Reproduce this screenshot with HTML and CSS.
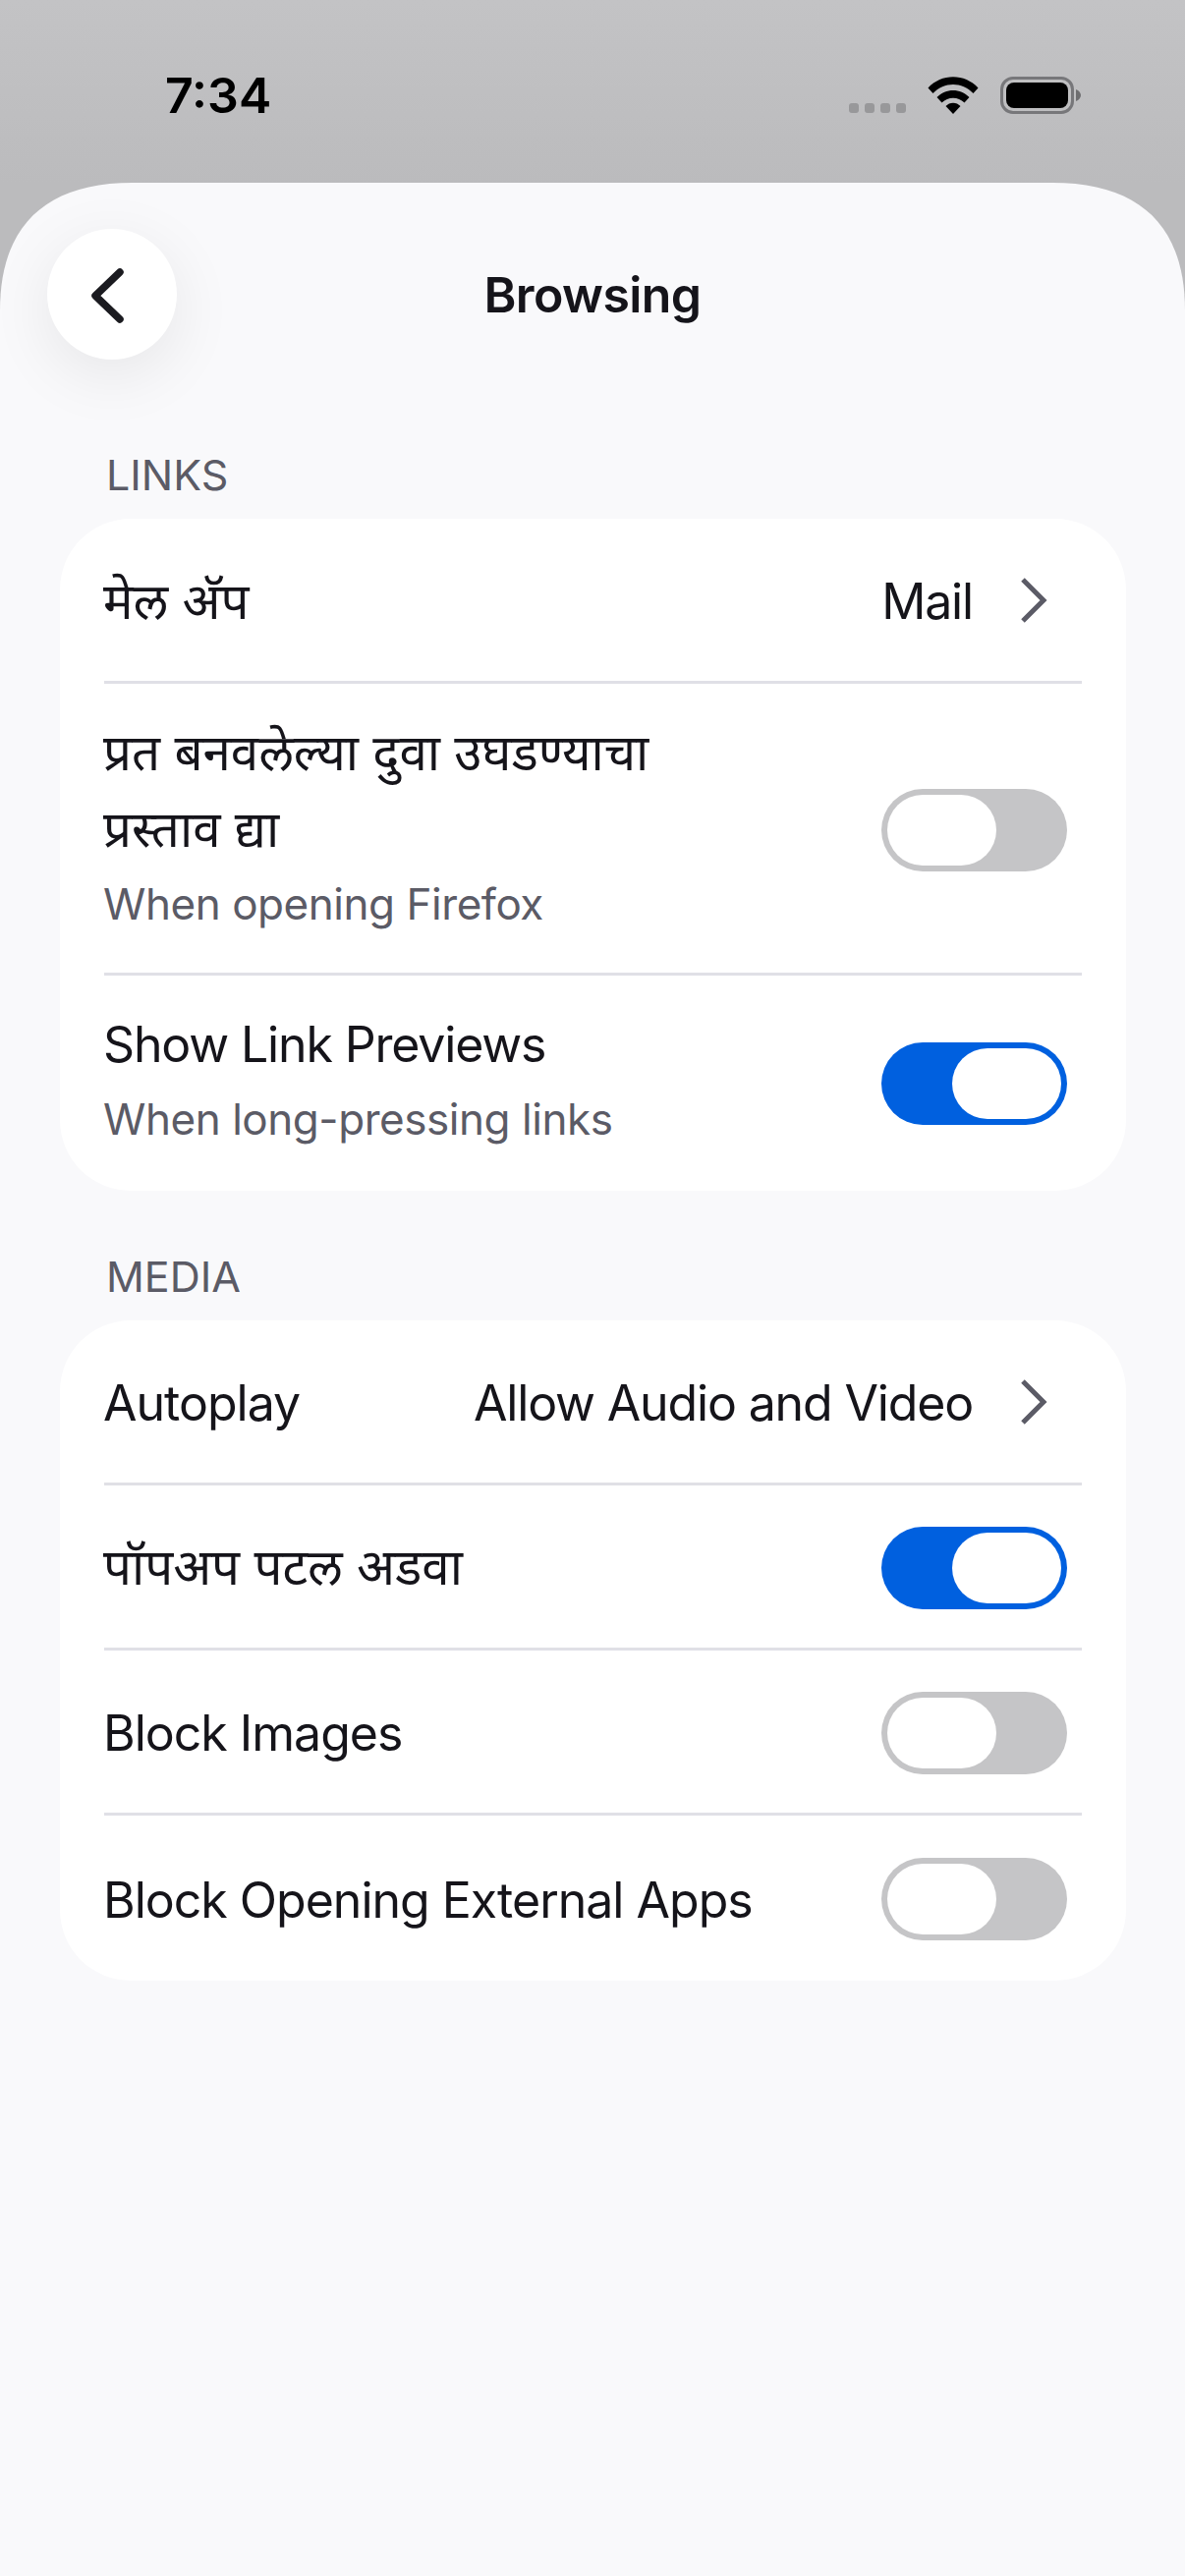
FILE: index.html
```html
<!DOCTYPE html>
<html lang="mr">
<head>
<meta charset="utf-8">
<title>Browsing</title>
<link rel="stylesheet" href="styles.css">
</head>
<body>
<div class="screen">
  <header class="status">
    <span class="time">7:34</span>
    <div class="status-icons">
      <div class="dots"><i></i><i></i><i></i><i></i></div>
      <svg class="wifi" width="52" height="38" viewBox="0 0 52 38"><path d="M0.5 11.500 C14 -3.500 38 -3.500 51.500 11.500 L46.500 17 C35 5 17 5 5.500 17 Z M9.500 21 C18.500 11.500 33.500 11.500 42.500 21 L37.500 26.500 C31 20 21 20 14.500 26.500 Z M18.500 30 C22.500 25.500 29.500 25.500 33.500 30 L26 38 Z" fill="#000"/></svg>
      <div class="battery"><div class="battery-body"><div class="battery-fill"></div></div><svg class="battery-tip" width="5" height="12" viewBox="0 0 5 12"><path d="M0 0 C3 1 5 3.500 5 6 C5 8.500 3 11 0 12 Z" fill="#6e6e70"/></svg></div>
    </div>
  </header>
  <main class="sheet">
    <div class="nav">
      <button class="back"><svg width="33" height="56" viewBox="0 0 33 56"><path d="M29 4 L4 28 L29 52" fill="none" stroke="#1b1b20" stroke-width="7.500" stroke-linecap="round" stroke-linejoin="round"/></svg></button>
      <h1 class="title">Browsing</h1>
    </div>
    <h2 class="section-label first">LINKS</h2>
    <section class="card">
      <div class="row nav-row"><span class="label deva single">मेल अ‍ॅप</span><span class="value single">Mail</span><svg class="chev" width="28" height="46" viewBox="0 0 28 46"><path d="M3 2 L24 23 L3 44" fill="none" stroke="#5b5b66" stroke-width="5"/></svg></div>
      <div class="row tall"><div class="text"><span class="label deva wrap">प्रत बनवलेल्या दुवा उघडण्याचा प्रस्ताव द्या</span><span class="sub">When opening Firefox</span></div><div class="toggle"><div class="knob"></div></div></div>
      <div class="row medium"><div class="text"><span class="label">Show Link Previews</span><span class="sub">When long-pressing links</span></div><div class="toggle on"><div class="knob"></div></div></div>
    </section>
    <h2 class="section-label">MEDIA</h2>
    <section class="card">
      <div class="row nav-row"><span class="label single">Autoplay</span><span class="value single">Allow Audio and Video</span><svg class="chev" width="28" height="46" viewBox="0 0 28 46"><path d="M3 2 L24 23 L3 44" fill="none" stroke="#5b5b66" stroke-width="5"/></svg></div>
      <div class="row plain"><span class="label deva">पॉपअप पटल अडवा</span><div class="toggle on"><div class="knob"></div></div></div>
      <div class="row plain"><span class="label single">Block Images</span><div class="toggle"><div class="knob"></div></div></div>
      <div class="row plain"><span class="label single">Block Opening External Apps</span><div class="toggle"><div class="knob"></div></div></div>
    </section>
  </main>
</div>
</body>
</html>
```
FILE: styles.css
```css
* { box-sizing: border-box; }
html, body { margin: 0; padding: 0; }
body { width: 1206px; height: 2622px; overflow: hidden; font-family: Inter, "Noto Sans", "Noto Sans Devanagari", "Liberation Sans", sans-serif; color: #15141a; background: #bfbfc1; }
.screen { width: 1206px; height: 2622px; display: flex; flex-direction: column; background: linear-gradient(#c3c3c5, #bbbbbd 186px); }
.status { height: 186px; flex: none; display: flex; justify-content: space-between; align-items: flex-start; padding: 72px 106px 0 168px; }
.time { font-size: 50px; line-height: 50px; font-weight: 600; color: #000; }
.status-icons { display: flex; align-items: flex-start; padding-top: 6px; }
.dots { display: flex; gap: 6px; margin-top: 27px; margin-right: 22px; }
.dots i { width: 10px; height: 10px; border-radius: 3px; background: #98989a; }
.battery { display: flex; align-items: center; margin-left: 22px; }
.battery-body { width: 75px; height: 38px; border: 3px solid #77777a; border-radius: 13px; padding: 3px; }
.battery-fill { width: 100%; height: 100%; background: #000; border-radius: 8px; }
.battery-tip { margin-left: 2px; }
.sheet { flex: 1; background: #f9f9fb; clip-path: path("M0 130 C0 45 45 0 135 0 L1071 0 C1161 0 1206 45 1206 130 L1206 2436 L0 2436 Z"); padding: 47px 60px 0 61px; }
.nav { height: 133px; position: relative; display: flex; align-items: center; justify-content: center; margin-left: -61px; margin-right: -60px; }
.back { position: absolute; left: 48px; top: 0; width: 132px; height: 133px; border: 0; padding: 2px 9px 0 0; border-radius: 50%; background: #fff; box-shadow: 0 16px 64px rgba(0,0,0,.08); display: flex; align-items: center; justify-content: center; }
.title { margin: 0; font-size: 50px; line-height: 60px; font-weight: 600; letter-spacing: -0.6px; color: #15141a; }
.section-label { margin: 62px 0 20px; font-size: 43px; line-height: 50px; font-weight: 400; color: #5b5b66; padding-left: 47px; height: 50px; }
.section-label.first { margin-top: 92px; }
.card { background: #fff; border-radius: 72px; padding: 0 45px; }
.row { display: flex; align-items: center; border-bottom: 3px solid #e0e0e6; padding-right: 15px; }
.row:last-child { border-bottom: 0; }
.nav-row { height: 168px; padding-right: 35px; }
.tall { height: 297px; }
.tall .text { margin-bottom: 3px; }
.tall .toggle { margin-top: 3px; }
.medium { height: 219px; }
.medium .text { margin-bottom: 6px; }
.plain { height: 168px; }
.plain .toggle { margin-top: 2px; }
.label { font-size: 50px; line-height: 78px; letter-spacing: -1.15px; display: block; margin-left: -1px; }
.single { padding-top: 3px; letter-spacing: -1px; }
.deva { font-size: 51px; letter-spacing: 0; }
.wrap { width: 600px; }
.text { flex: 1; display: flex; flex-direction: column; }
.sub { font-size: 44px; line-height: 74px; letter-spacing: -0.45px; color: #5b5b66; display: block; margin-left: -1px; }
.nav-row .label { flex: none; }
.value { flex: 1; text-align: right; font-size: 50px; line-height: 78px; letter-spacing: -1.15px; margin-right: 48px; }
.toggle { width: 189px; height: 84px; border-radius: 42px; background: #c5c5c7; padding: 6px; flex: none; margin-left: auto; display: flex; }
.toggle.on { background: #0060df; justify-content: flex-end; }
.knob { width: 111px; height: 72px; border-radius: 36px; background: #fff; }
```
